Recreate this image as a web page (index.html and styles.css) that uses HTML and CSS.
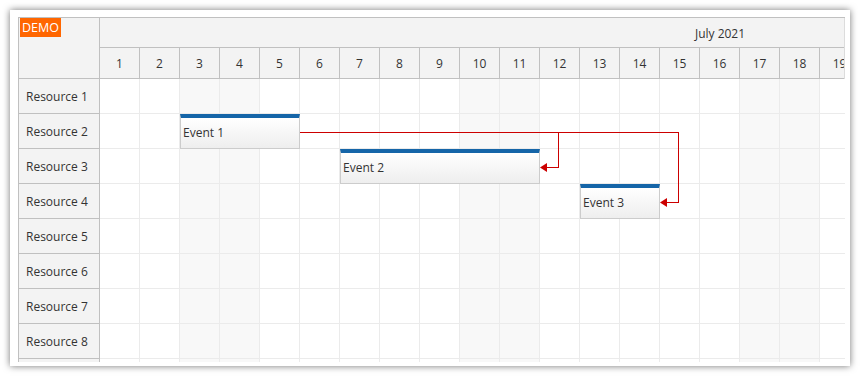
FILE: index.html
```html
<!DOCTYPE html>
<html lang="en">
<head>
    <meta charset="UTF-8">
    <title>Scheduler</title>
    <link rel="stylesheet" href="styles.css">
</head>
<body>

    <div class="frame">
        <div class="scheduler">
            <div class="corner">
                <span class="demo">DEMO</span>
            </div>
            <div class="timeheader">
                <div class="month">July 2021</div>
                <div class="days" id="days"></div>
            </div>
            <div class="rowheaders" id="rowheaders"></div>
            <div class="canvas">
                <div class="rows" id="rows"></div>

                <div class="event" style="left: 80px; top: 35px; width: 120px;">Event 1</div>
                <div class="event" style="left: 240px; top: 70px; width: 200px;">Event 2</div>
                <div class="event" style="left: 480px; top: 105px; width: 80px;">Event 3</div>

                <svg class="links" width="760" height="320">
                    <path d="M200 53.5 H578.5 V123.5 H566" />
                    <path d="M458.5 53.5 V88.5 H446" />
                    <polygon points="440,88.5 447,84 447,93" />
                    <polygon points="560,123.5 567,119 567,128" />
                </svg>
            </div>
        </div>
    </div>

<script>
    // only the days and rows that fit in the visible viewport are rendered
    const visibleDays = 19;
    const resources = 8;
    const weekend = [3, 4, 10, 11, 17, 18];
    const days = document.getElementById('days');
    const rows = document.getElementById('rows');
    const rowheaders = document.getElementById('rowheaders');

    for (let d = 1; d <= visibleDays; d++) {
        const cell = document.createElement('div');
        cell.className = 'day';
        cell.textContent = d;
        days.appendChild(cell);
    }

    // one extra row peeks in under the last resource
    for (let r = 1; r <= resources + 1; r++) {
        const head = document.createElement('div');
        head.className = 'rowheader';
        if (r <= resources) head.textContent = 'Resource ' + r;
        rowheaders.appendChild(head);

        const row = document.createElement('div');
        row.className = 'row';
        for (let d = 1; d <= visibleDays; d++) {
            const cell = document.createElement('div');
            cell.className = weekend.includes(d) ? 'cell weekend' : 'cell';
            row.appendChild(cell);
        }
        rows.appendChild(row);
    }
</script>

</body>
</html>
```

FILE: styles.css
```css
* {
    margin: 0;
    padding: 0;
    box-sizing: border-box;
}

body {
    font-family: "Open Sans", "Noto Sans", sans-serif;
    font-size: 12px;
    color: #333;
    background-color: #fff;
}

.frame {
    margin: 10px;
    width: 840px;
    height: 356px;
    padding: 7px 0 0 8px;
    background-color: #fff;
    box-shadow: 0 0 7px rgba(0, 0, 0, 0.55);
}

.scheduler {
    width: 827px;
    height: 345px;
    display: grid;
    grid-template-columns: 81px minmax(0, 1fr);
    grid-template-rows: 61px minmax(0, 1fr);
    border-left: 1px solid #c0c0c0;
    border-top: 1px solid #c0c0c0;
    overflow: hidden;
}

.corner {
    background-color: #f3f3f3;
    border-right: 1px solid #c0c0c0;
    border-bottom: 1px solid #c0c0c0;
    padding: 0 0 0 1px;
}

.demo {
    display: inline-block;
    background-color: #ff6600;
    color: #fff;
    padding: 1px 2px;
    line-height: 17px;
    font-size: 12.5px;
}

.timeheader {
    overflow: hidden;
    min-width: 0;
    background-color: #f3f3f3;
    border-right: 1px solid #dcdcdc;
}

/* the month spans all 31 days, so its label sits past the visible area's middle */
.month {
    width: 1240px;
    height: 30px;
    padding-top: 1px;
    line-height: 29px;
    text-align: center;
    border-bottom: 1px solid #c0c0c0;
}

.days {
    display: flex;
}

.day {
    flex: 0 0 40px;
    height: 31px;
    padding-top: 2px;
    line-height: 28px;
    text-align: center;
    border-right: 1px solid #c0c0c0;
    border-bottom: 1px solid #c0c0c0;
}

.rowheaders {
    overflow: hidden;
    background-color: #f3f3f3;
    border-right: 1px solid #c0c0c0;
}

.rowheader {
    height: 35px;
    padding: 2px 0 0 7px;
    line-height: 32px;
    border-bottom: 1px solid #c0c0c0;
}

.canvas {
    position: relative;
    overflow: hidden;
    min-width: 0;
}

.row {
    display: flex;
    height: 35px;
}

.cell {
    flex: 0 0 40px;
    border-right: 1px solid #ebebeb;
    border-bottom: 1px solid #ebebeb;
}

.cell.weekend {
    background-color: #f8f8f8;
}

.event {
    position: absolute;
    height: 35px;
    padding: 0 0 0 2px;
    line-height: 29px;
    border: 1px solid #cccccc;
    border-top: 4px solid #1565a8;
    background: linear-gradient(#ffffff, #eeeeee);
    color: #333;
    white-space: nowrap;
}

.links {
    position: absolute;
    top: 0;
    left: 0;
}

.links path {
    fill: none;
    stroke: #cc0000;
    stroke-width: 1;
    shape-rendering: crispEdges;
}

.links polygon {
    fill: #cc0000;
}
```
